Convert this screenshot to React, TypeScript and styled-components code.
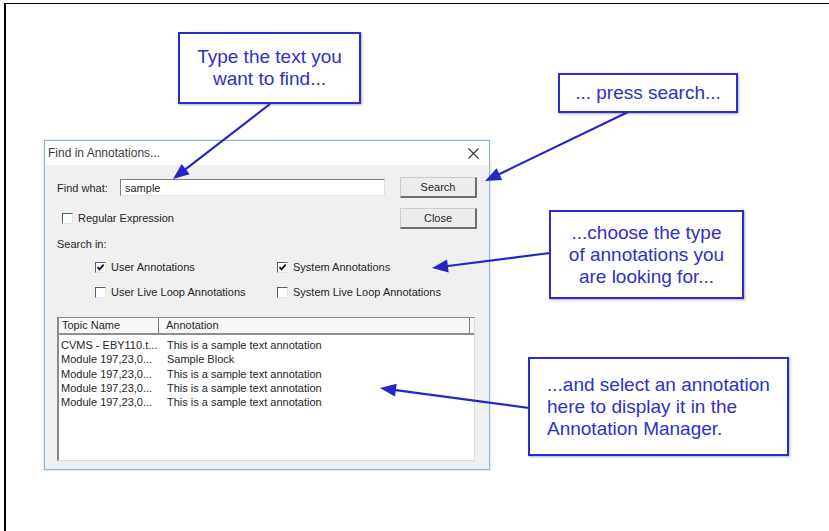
import React from 'react'
import styled, { createGlobalStyle } from 'styled-components'

const GlobalStyle = createGlobalStyle`
  html, body {
    margin: 0;
    padding: 0;
    background: #fff;
  }
  body {
    font-family: 'Liberation Sans', Arial, sans-serif;
  }
`

const Page = styled.div`
  position: relative;
  width: 829px;
  height: 531px;
  overflow: hidden;
  box-sizing: border-box;
  padding: 3px 0 0 4px;
  background: #fff;
`

const Frame = styled.div`
  height: 100%;
  box-sizing: border-box;
  border-left: 2px solid #000;
  border-top: 1px solid #000;
  padding: 136px 0 0 38px;
`

const Dialog = styled.div`
  width: 446px;
  height: 330px;
  box-sizing: border-box;
  border: 1px solid #8fb4dc;
  box-shadow: 0 0 2px rgba(120, 160, 210, 0.6);
  background: #f0f0f0;
  display: flex;
  flex-direction: column;
  font-size: 11px;
  color: #262626;
`

const TitleBar = styled.div`
  height: 24px;
  flex-shrink: 0;
  background: #fff;
  display: flex;
  align-items: center;
  justify-content: space-between;
  padding: 0 10px 0 3px;
  font-size: 12px;
  color: #3c3c3c;
`

const DialogBody = styled.div`
  flex: 1;
  display: flex;
  flex-direction: column;
  padding: 12px 12px 8px 12px;
  min-height: 0;
`

const TopArea = styled.div`
  display: flex;
  gap: 15px;
`

const FormCol = styled.div`
  flex: 1;
  min-width: 0;
  display: flex;
  flex-direction: column;
`

const ButtonCol = styled.div`
  width: 77px;
  flex-shrink: 0;
  display: flex;
  flex-direction: column;
  gap: 10px;
`

const FindRow = styled.div`
  height: 21px;
  display: flex;
  align-items: center;
`

const FieldLabel = styled.span`
  width: 63px;
  flex-shrink: 0;
`

const TextField = styled.input`
  flex: 1;
  min-width: 0;
  height: 17px;
  box-sizing: border-box;
  margin: 0;
  padding: 0 4px;
  border-style: solid;
  border-width: 1px;
  border-color: #7d7d7d #e3e3e3 #e3e3e3 #7d7d7d;
  background: #fff;
  font-family: 'Liberation Sans', Arial, sans-serif;
  font-size: 11px;
  color: #262626;
  outline: none;
`

const DialogButton = styled.button`
  width: 100%;
  height: 21px;
  box-sizing: border-box;
  margin: 0;
  padding: 0;
  border-style: solid;
  border-width: 1px 2px 2px 1px;
  border-color: #cdcdcd #6e6e6e #6e6e6e #cdcdcd;
  background: #ededed;
  font-family: 'Liberation Sans', Arial, sans-serif;
  font-size: 11px;
  color: #262626;
`

const OptionRow = styled.label<{ $top: number; $indent: number }>`
  height: 16px;
  margin-top: ${p => p.$top}px;
  padding-left: ${p => p.$indent}px;
  display: flex;
  align-items: center;
  gap: 5px;
`

const SectionLabel = styled.div`
  height: 14px;
  line-height: 14px;
  margin-top: 11px;
`

const CheckGrid = styled.div`
  margin-top: 8px;
  padding-left: 38px;
  display: grid;
  grid-template-columns: 182px 1fr;
  row-gap: 9px;
  margin-right: -80px;
`

const CheckItem = styled.label`
  height: 16px;
  display: flex;
  align-items: center;
  gap: 5px;
  white-space: nowrap;
`

const Box = styled.span`
  width: 11px;
  height: 11px;
  flex-shrink: 0;
  box-sizing: border-box;
  border-style: solid;
  border-width: 1px;
  border-color: #5e5e5e #e6e6e6 #e6e6e6 #5e5e5e;
  background: #fff;
  display: flex;
  align-items: center;
  justify-content: center;
`

const ListView = styled.div`
  flex: 1;
  margin-top: 17px;
  margin-right: 2px;
  box-sizing: border-box;
  border-style: solid;
  border-width: 1px 1px 1px 2px;
  border-color: #8a8a8a #dcdcdc #dcdcdc #8a8a8a;
  background: #fff;
  display: flex;
  flex-direction: column;
`

const ListHeader = styled.div`
  height: 17px;
  box-sizing: border-box;
  display: grid;
  grid-template-columns: 100px 311px 1fr;
  border-bottom: 2px solid #8e8e8e;
  background: #f8f8f8;
`

const HeaderCell = styled.div<{ $pad: number; $last?: boolean }>`
  padding-left: ${p => p.$pad}px;
  line-height: 15px;
  border-right: ${p => (p.$last ? 'none' : '1px solid #7a7a7a')};
  white-space: nowrap;
  overflow: hidden;
`

const ListRows = styled.div`
  padding-top: 3px;
`

const ListRow = styled.div`
  height: 14.3px;
  line-height: 14.3px;
  display: grid;
  grid-template-columns: 108px 1fr;
  white-space: nowrap;
`

const RowCell = styled.span<{ $pad: number }>`
  padding-left: ${p => p.$pad}px;
  overflow: hidden;
`

const Callout = styled.div<{ $x: number; $y: number; $w: number; $h: number; $left?: boolean }>`
  position: absolute;
  left: ${p => p.$x}px;
  top: ${p => p.$y}px;
  width: ${p => p.$w}px;
  height: ${p => p.$h}px;
  box-sizing: border-box;
  border: 2px solid #2b2bd0;
  box-shadow: 1px 1px 2px rgba(20, 20, 90, 0.35);
  background: #fff;
  display: flex;
  align-items: center;
  justify-content: ${p => (p.$left ? 'flex-start' : 'center')};
  padding-left: ${p => (p.$left ? 17 : 0)}px;
  text-align: ${p => (p.$left ? 'left' : 'center')};
  font-family: 'Liberation Sans', Arial, sans-serif;
  font-size: 19px;
  line-height: 22px;
  color: #3030c8;
  white-space: nowrap;
`

const Overlay = styled.svg`
  position: absolute;
  left: 0;
  top: 0;
  width: 829px;
  height: 531px;
  pointer-events: none;
`

const Checkbox = ({ checked }: { checked?: boolean }) => (
  <Box>
    {checked && (
      <svg width="9" height="9" viewBox="0 0 9 9">
        <path d="M1.5 4.2 L3.5 6.4 L7.6 1.6" fill="none" stroke="#111" strokeWidth="1.8" />
      </svg>
    )}
  </Box>
)

type Pt = [number, number]

const Arrow = ({ from, to }: { from: Pt; to: Pt }) => {
  const dx = to[0] - from[0]
  const dy = to[1] - from[1]
  const len = Math.hypot(dx, dy)
  const ux = dx / len
  const uy = dy / len
  const headLen = 16
  const headHalf = 6.5
  const bx = to[0] - ux * headLen
  const by = to[1] - uy * headLen
  const p1 = `${bx - uy * headHalf},${by + ux * headHalf}`
  const p2 = `${bx + uy * headHalf},${by - ux * headHalf}`
  return (
    <g>
      <line x1={from[0]} y1={from[1]} x2={bx + ux * 2} y2={by + uy * 2} stroke="#2626c6" strokeWidth="2.2" />
      <polygon points={`${to[0]},${to[1]} ${p1} ${p2}`} fill="#2626c6" />
    </g>
  )
}

const rows = [
  ['CVMS - EBY110.t...', 'This is a sample text annotation'],
  ['Module 197,23,0...', 'Sample Block'],
  ['Module 197,23,0...', 'This is a sample text annotation'],
  ['Module 197,23,0...', 'This is a sample text annotation'],
  ['Module 197,23,0...', 'This is a sample text annotation'],
]

export default function App() {
  return (
    <>
      <GlobalStyle />
      <Page>
        <Frame>
          <Dialog>
            <TitleBar>
              <span>Find in Annotations...</span>
              <svg width="11" height="11" viewBox="0 0 11 11">
                <path d="M0.5 0.5 L10.5 10.5 M10.5 0.5 L0.5 10.5" stroke="#333" strokeWidth="1.1" />
              </svg>
            </TitleBar>
            <DialogBody>
              <TopArea>
                <FormCol>
                  <FindRow>
                    <FieldLabel>Find what:</FieldLabel>
                    <TextField defaultValue="sample" readOnly />
                  </FindRow>
                  <OptionRow $top={12} $indent={5}>
                    <Checkbox />
                    <span>Regular Expression</span>
                  </OptionRow>
                  <SectionLabel>Search in:</SectionLabel>
                  <CheckGrid>
                    <CheckItem>
                      <Checkbox checked />
                      <span>User Annotations</span>
                    </CheckItem>
                    <CheckItem>
                      <Checkbox checked />
                      <span>System Annotations</span>
                    </CheckItem>
                    <CheckItem>
                      <Checkbox />
                      <span>User Live Loop Annotations</span>
                    </CheckItem>
                    <CheckItem>
                      <Checkbox />
                      <span>System Live Loop Annotations</span>
                    </CheckItem>
                  </CheckGrid>
                </FormCol>
                <ButtonCol>
                  <DialogButton>Search</DialogButton>
                  <DialogButton>Close</DialogButton>
                </ButtonCol>
              </TopArea>
              <ListView>
                <ListHeader>
                  <HeaderCell $pad={3}>Topic Name</HeaderCell>
                  <HeaderCell $pad={7}>Annotation</HeaderCell>
                  <HeaderCell $pad={0} $last />
                </ListHeader>
                <ListRows>
                  {rows.map((r, i) => (
                    <ListRow key={i}>
                      <RowCell $pad={2}>{r[0]}</RowCell>
                      <RowCell $pad={0}>{r[1]}</RowCell>
                    </ListRow>
                  ))}
                </ListRows>
              </ListView>
            </DialogBody>
          </Dialog>
        </Frame>

        <Overlay viewBox="0 0 829 531">
          <Arrow from={[270, 104]} to={[173, 179]} />
          <Arrow from={[628, 112]} to={[485, 181]} />
          <Arrow from={[550, 253]} to={[432, 268]} />
          <Arrow from={[529, 408]} to={[380, 388]} />
        </Overlay>

        <Callout $x={178} $y={32} $w={183} $h={72}>
          Type the text you
          <br />
          want to find...
        </Callout>
        <Callout $x={558} $y={73} $w={180} $h={40}>
          ... press search...
        </Callout>
        <Callout $x={549} $y={210} $w={195} $h={89}>
          ...choose the type
          <br />
          of annotations you
          <br />
          are looking for...
        </Callout>
        <Callout $x={528} $y={357} $w={261} $h={99} $left>
          ...and select an annotation
          <br />
          here to display it in the
          <br />
          Annotation Manager.
        </Callout>
      </Page>
    </>
  )
}
